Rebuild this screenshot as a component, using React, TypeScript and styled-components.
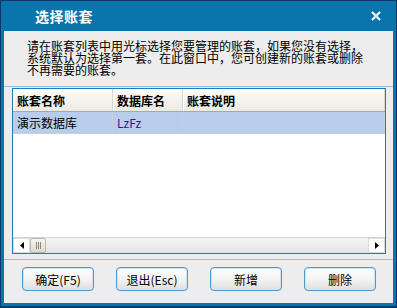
import React from "react";
import styled, { createGlobalStyle } from "styled-components";

const GlobalStyle = createGlobalStyle`
  html, body {
    margin: 0;
    padding: 0;
    background: #ffffff;
  }
  * {
    box-sizing: border-box;
  }
`;

const Window = styled.div`
  width: 397px;
  height: 308px;
  display: flex;
  flex-direction: column;
  background: #0a74ad;
  border: 1px solid #0c3a68;
  border-bottom-width: 2px;
  padding: 0 3px 3px 3px;
  font-family: "Noto Sans CJK SC", "Liberation Sans", sans-serif;
  font-size: 12px;
  color: #000;
`;

const TitleBar = styled.div`
  height: 30px;
  display: flex;
  align-items: center;
  justify-content: space-between;
  padding: 0 11px 0 31px;
`;

const Title = styled.div`
  color: #ffffff;
  font-size: 14px;
  font-weight: 700;
  letter-spacing: 0.5px;
`;

const CloseButton = styled.button`
  width: 12px;
  height: 12px;
  padding: 0;
  border: none;
  background: none;
  display: flex;
  align-items: center;
  justify-content: center;
`;

const Body = styled.div`
  flex: 1;
  display: flex;
  flex-direction: column;
  background: #ededed;
`;

const Intro = styled.p`
  margin: 0;
  padding: 9px 10px 0 23px;
  height: 55px;
  line-height: 12px;
  font-size: 12px;
`;

const Separator = styled.div`
  height: 1px;
  background: #8fbfe8;
`;

const GridWrap = styled.div`
  padding: 1px 7px 0 8px;
  height: 172px;
`;

const Grid = styled.div`
  height: 166px;
  display: flex;
  flex-direction: column;
  border: 1px solid #1f7db8;
  background: #ffffff;
`;

const HeaderRow = styled.div`
  display: flex;
  height: 23px;
  background: linear-gradient(#fcfcfa, #ebeae1);
  border-bottom: 1px solid #a9a89c;
`;

const HeaderCell = styled.div<{ $w?: number }>`
  ${(p) => (p.$w ? `width: ${p.$w}px;` : "flex: 1;")}
  display: flex;
  align-items: center;
  padding-left: 4px;
  font-weight: 700;
  border-right: 1px solid #d8d7cc;
  box-shadow: inset 1px 0 0 #ffffff;
`;

const DataRow = styled.div<{ $selected?: boolean }>`
  display: flex;
  height: 22px;
  background: ${(p) => (p.$selected ? "#b7cdeb" : "#ffffff")};
  border-bottom: 1px solid #c6cfdc;
`;

const Cell = styled.div<{ $w?: number; $color?: string }>`
  ${(p) => (p.$w ? `width: ${p.$w}px;` : "flex: 1;")}
  display: flex;
  align-items: center;
  padding-left: 4px;
  color: ${(p) => p.$color || "#000"};
  border-right: 1px solid #c6cfdc;
`;

const Filler = styled.div`
  flex: 1;
`;

const ScrollBar = styled.div`
  height: 16px;
  display: flex;
  background: linear-gradient(#f4f4f4, #e4e4e4);
  border-top: 1px solid #d4d4d4;
`;

const ScrollArrow = styled.div`
  width: 17px;
  display: flex;
  align-items: center;
  justify-content: center;
  background: #ffffff;
  border: 1px solid #dcdcdc;
`;

const ScrollThumb = styled.div`
  width: 16px;
  display: flex;
  align-items: center;
  justify-content: center;
  gap: 1px;
  background: linear-gradient(#f6f5ef, #dcdad0);
  border: 1px solid #bab8ad;
  border-radius: 2px;

  span {
    width: 1px;
    height: 7px;
    background: #8c8a7e;
  }
`;

const ScrollTrack = styled.div`
  flex: 1;
`;

const ButtonBar = styled.div`
  flex: 1;
  display: flex;
  gap: 22px;
  padding: 7px 0 0 18px;
`;

const DialogButton = styled.button`
  width: 72px;
  height: 24px;
  padding: 0;
  border: 1px solid #4f98c9;
  border-radius: 4px;
  background: linear-gradient(#ffffff, #f2f2f2 55%, #dedede);
  box-shadow: inset 0 0 0 1px #cfe4f3;
  font-family: "Noto Sans CJK SC", "Liberation Sans", sans-serif;
  font-size: 12px;
  color: #000;
`;

function Arrow({ dir }: { dir: "left" | "right" }) {
  return (
    <svg width="4" height="7" viewBox="0 0 4 7">
      {dir === "left" ? (
        <polygon points="4,0 4,7 0,3.5" fill="#000" />
      ) : (
        <polygon points="0,0 0,7 4,3.5" fill="#000" />
      )}
    </svg>
  );
}

export default function App() {
  return (
    <Window>
      <GlobalStyle />
      <TitleBar>
        <Title>选择账套</Title>
        <CloseButton>
          <svg width="10" height="10" viewBox="0 0 10 10">
            <path d="M1 1 L9 9 M9 1 L1 9" stroke="#fff" strokeWidth="2" />
          </svg>
        </CloseButton>
      </TitleBar>
      <Body>
        <Intro>
          请在账套列表中用光标选择您要管理的账套，如果您没有选择，
          <br />
          系统默认为选择第一套。在此窗口中，您可创建新的账套或删除
          <br />
          不再需要的账套。
        </Intro>
        <Separator />
        <GridWrap>
          <Grid>
            <HeaderRow>
              <HeaderCell $w={100}>账套名称</HeaderCell>
              <HeaderCell $w={70}>数据库名</HeaderCell>
              <HeaderCell>账套说明</HeaderCell>
            </HeaderRow>
            <DataRow $selected>
              <Cell $w={100}>演示数据库</Cell>
              <Cell $w={70} $color="#3a1486">
                LzFz
              </Cell>
              <Cell />
            </DataRow>
            <Filler />
            <ScrollBar>
              <ScrollArrow>
                <Arrow dir="left" />
              </ScrollArrow>
              <ScrollThumb>
                <span />
                <span />
                <span />
              </ScrollThumb>
              <ScrollTrack />
              <ScrollArrow>
                <Arrow dir="right" />
              </ScrollArrow>
            </ScrollBar>
          </Grid>
        </GridWrap>
        <Separator />
        <ButtonBar>
          <DialogButton>确定(F5)</DialogButton>
          <DialogButton>退出(Esc)</DialogButton>
          <DialogButton>新增</DialogButton>
          <DialogButton>删除</DialogButton>
        </ButtonBar>
      </Body>
    </Window>
  );
}
